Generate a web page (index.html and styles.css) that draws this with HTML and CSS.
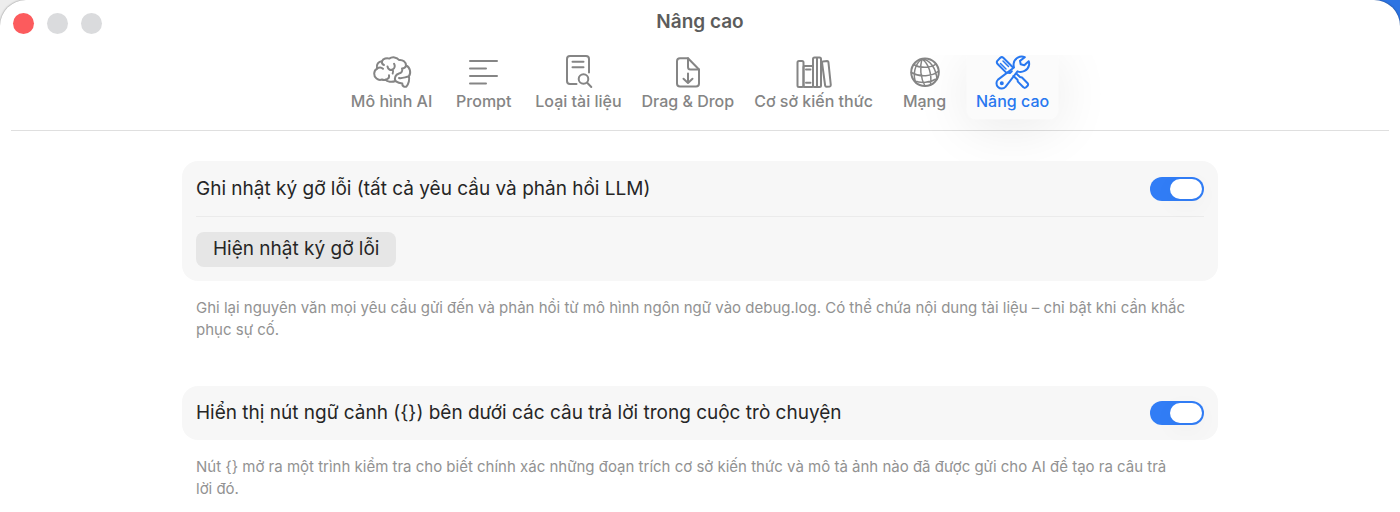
FILE: index.html
```html
<!DOCTYPE html>
<html lang="vi">
<head>
  <meta charset="UTF-8" />
  <title>Nâng cao</title>
  <meta name="viewport" content="width=device-width, initial-scale=1.0" />
  <link rel="stylesheet" href="styles.css">
</head>
<body>
  <div class="window">

    <!-- Title bar -->
    <header class="titlebar">
      <div class="lights">
        <button class="light light-close" aria-label="Đóng"></button>
        <button class="light" aria-label="Thu nhỏ" disabled></button>
        <button class="light" aria-label="Phóng to" disabled></button>
      </div>
      <h1 class="title">Nâng cao</h1>
    </header>

    <!-- Tabs -->
    <nav class="tabs">
      <button class="tab">
        <svg viewBox="0 0 40 35">
          <path d="M10 24.500C6 26 2 22.500 2.200 18.500C2.300 16 3.400 14.500 5 13.600C4 9 6.500 6.500 10 6.300C11 3.500 15 2.500 17.500 3.600C20 1.500 25 2 27 5C31 4.500 34 7 34 10.500C38 12 39.500 18 36.800 21.500C38 24 36.500 29 34.500 31.500C32.500 32.500 30 31 30.300 28.500C26 28 25 27 23.500 26C20 27.500 15 27 13.500 24.800C12.500 25 11 25 10 24.500"/>
          <path d="M5 13.600C7 12.200 9.500 12.300 11 13.800M10 6.300C9.500 8.500 10.500 9.500 12 10M13.500 24.800C16 24.200 17.500 22.500 17 20.300M15.500 11.500C16 14.500 18.500 15.500 20.500 14.500C23 13.500 23.300 10.500 22 8.700M20.500 14.500C21.500 16 21.500 17 20.700 18.500M34 10.500C33.500 12.500 32 13.500 30 13.500C31 16 29.500 18 27 18.500C23.500 19.500 22 23 23.500 26M27 23C29.500 23.700 32 22.500 36.800 21.500"/>
        </svg>
        <span>Mô hình AI</span>
      </button>
      <button class="tab">
        <svg viewBox="0 0 40 35">
          <path d="M6 6H33M6 13.500H22M6 21H33M6 28.500H22"/>
        </svg>
        <span>Prompt</span>
      </button>
      <button class="tab">
        <svg viewBox="0 0 40 35">
          <path d="M18.500 29H12Q9 29 9 26V4Q9 1 12 1H28Q31 1 31 4V17.500M14.500 6.700H25.500M14.500 12.300H25.500"/>
          <circle cx="25.500" cy="24" r="4.800"/>
          <path d="M29.200 27.700L33.300 32"/>
        </svg>
        <span>Loại tài liệu</span>
      </button>
      <button class="tab">
        <svg viewBox="0 0 40 35">
          <path d="M20 3.200H12Q9 3.200 9 6.200V28.400Q9 31.400 12 31.400H28Q31 31.400 31 28.400V14.500Z"/>
          <path d="M20 3.200V12Q20 14.500 22.500 14.500H31M20 18.500V27.800M15.500 23.800L20 28L24.500 23.800"/>
        </svg>
        <span>Drag &amp; Drop</span>
      </button>
      <button class="tab">
        <svg viewBox="0 0 40 35">
          <rect x="3.500" y="6" width="6" height="26" rx="1.500"/>
          <rect x="9.500" y="11" width="9.500" height="21" rx="1"/>
          <rect x="19" y="2.500" width="8" height="29.500" rx="1.500"/>
          <path d="M23 3V31.500M28.800 6.500L33.200 6Q34.200 6 34.400 7L36.800 30Q36.800 31.200 35.800 31.400L32.500 31.800Q31.400 31.800 31.200 30.800L28 7.500Q28 6.600 28.800 6.500M12 14.500H16.500M12 27.700H16.500"/>
        </svg>
        <span>Cơ sở kiến thức</span>
      </button>
      <button class="tab">
        <svg viewBox="0 0 40 35">
          <circle cx="20" cy="17.300" r="13.800"/>
          <path class="thin" d="M17 3.800C9.500 9 7.500 20 11 28M17 3.800C14.500 12 15.500 23 20 31M17 3.800C24 9 27 19 25.500 30M17 3.800C25 5 31 13 32 24.500M8.500 9.500C15 13.500 26 13 31 9M6.300 17.500C15 22.500 27 21.500 33.700 16M9 25.500C16 28.500 25 28 32 23.500"/>
        </svg>
        <span>Mạng</span>
      </button>
      <button class="tab tab-active" aria-current="page">
        <svg viewBox="0 0 40 35">
          <path d="M18.800 16.200L17 18L13.200 17.600L4.600 9Q3.200 7.600 4.300 5.900L7.300 2.800Q8.800 1.500 10.300 2.800L19.800 12.200M23.500 18.800L27 22L29 22.500L34.600 28.200Q35.600 29.500 34.600 30.800L33.100 32.300Q31.800 33.400 30.400 32.300L24.800 26.600L24.500 24.700L20.500 21"/>
          <path class="thin" d="M10 6L15.500 11.500M7.500 8.500L13 14"/>
          <path d="M31.800 2.200C27 .3 21.500 3.300 20.700 8.300C20.400 10 20.600 11.200 21 12.500L5 24.600C3 26.500 2.900 30 5 32C7.200 34.200 10.600 34 12.500 31.900L24.500 16.300C29 18.200 35 15.400 36 10.300C36.300 8.800 36.200 7.500 35.700 6.200L31.300 10.300L27.700 9.300L27 5.900Z"/>
          <circle cx="8.800" cy="28.200" r="1"/>
        </svg>
        <span>Nâng cao</span>
      </button>
    </nav>

    <!-- Settings -->
    <main class="settings">
      <section>
        <div class="group">
          <div class="row">
            <label for="debugLog">Ghi nhật ký gỡ lỗi (tất cả yêu cầu và phản hồi LLM)</label>
            <input type="checkbox" class="switch" id="debugLog" checked>
          </div>
          <div class="row">
            <button class="btn">Hiện nhật ký gỡ lỗi</button>
          </div>
        </div>
        <p class="hint">Ghi lại nguyên văn mọi yêu cầu gửi đến và phản hồi từ mô hình ngôn ngữ vào debug.log. Có thể chứa nội dung tài liệu – chỉ bật khi cần khắc phục sự cố.</p>
      </section>

      <section>
        <div class="group">
          <div class="row">
            <label for="contextButton">Hiển thị nút ngữ cảnh ({}) bên dưới các câu trả lời trong cuộc trò chuyện</label>
            <input type="checkbox" class="switch" id="contextButton" checked>
          </div>
        </div>
        <p class="hint">Nút {} mở ra một trình kiểm tra cho biết chính xác những đoạn trích cơ sở kiến thức và mô tả ảnh nào đã được gửi cho AI để tạo ra câu trả lời đó.</p>
      </section>
    </main>

  </div>
</body>
</html>
```
FILE: styles.css
```css
* { box-sizing: border-box; margin: 0; padding: 0; }
body {
  font-family: Inter, sans-serif;
  color: #262626;
  background: linear-gradient(to right, #ededed 50%, #2d74e3 50%);
}
button {
  font: inherit;
  color: inherit;
  border: 0;
  background: none;
}

.window {
  min-height: 100vh;
  background: #fff;
  border-radius: 26px 26px 0 0;
  box-shadow: 0 0 2px rgba(0,0,0,0.5);
  overflow: hidden;
}

/* TITLE BAR */
.titlebar {
  display: grid;
  grid-template-columns: 1fr auto 1fr;
  align-items: center;
  height: 55px;
  padding: 0 13px 9px;
}
.lights {
  display: flex;
  gap: 13px;
}
.light {
  width: 21px;
  height: 21px;
  border-radius: 50%;
  background: #dadbdd;
}
.light-close {
  background: #fc5b5d;
}
.title {
  font-size: 19px;
  line-height: 24px;
  font-weight: 600;
  color: #5c5c5c;
  padding-bottom: 2px;
}

/* TABS */
.tabs {
  display: flex;
  justify-content: center;
  gap: 2px;
  margin: 0 11px;
  padding: 0 0 11px;
  border-bottom: 1px solid #dfdfdf;
  clip-path: inset(0 0 -60px);
}
.tab {
  display: flex;
  flex-direction: column;
  align-items: center;
  min-width: 81px;
  padding: 0 9px 6px;
  font-size: 16px;
  line-height: 23px;
  font-weight: 500;
  color: #858585;
}
.tab svg {
  width: 40px;
  height: 35px;
  fill: none;
  stroke: currentColor;
  stroke-width: 2;
  stroke-linecap: round;
  stroke-linejoin: round;
}
.tab .thin {
  stroke-width: 1.5;
}
.tab-active {
  color: #2878f0;
  background: #fbfbfb;
  border-radius: 0 0 9px 9px;
  box-shadow: 0 0 2px #fff, 0 8px 56px rgba(0,0,0,0.09);
}

/* SETTINGS */
.settings {
  position: relative;
  display: grid;
  gap: 45px;
  width: 74%;
  margin: 0 auto;
  padding: 30px 0 12px;
}
.group {
  padding: 0 14px;
  background: #f7f7f7;
  border-radius: 16px;
}
.row {
  display: flex;
  align-items: center;
  justify-content: space-between;
  min-height: 54px;
  font-size: 19px;
  line-height: 24px;
}
.row:not(:last-child) {
  min-height: 55px;
}
.row + .row {
  min-height: 65px;
  border-top: 1px solid #ebebeb;
}
.btn {
  height: 35px;
  padding: 0 17px;
  background: #e6e6e6;
  border-radius: 8px;
}
.hint {
  padding: 16px 32px 0 14px;
  font-size: 15px;
  line-height: 22px;
  color: #929292;
}

/* SWITCH */
.switch {
  appearance: none;
  display: flex;
  justify-content: flex-start;
  width: 54px;
  height: 24px;
  padding: 2px;
  background: #d5d5d5;
  border-radius: 12px;
}
.switch::before {
  content: "";
  width: 32px;
  height: 20px;
  background: #fff;
  border-radius: 10px;
  box-shadow: 0 6px 24px rgba(0,0,0,0.04);
}
.switch:checked {
  justify-content: flex-end;
  background: #317df6;
}
```
